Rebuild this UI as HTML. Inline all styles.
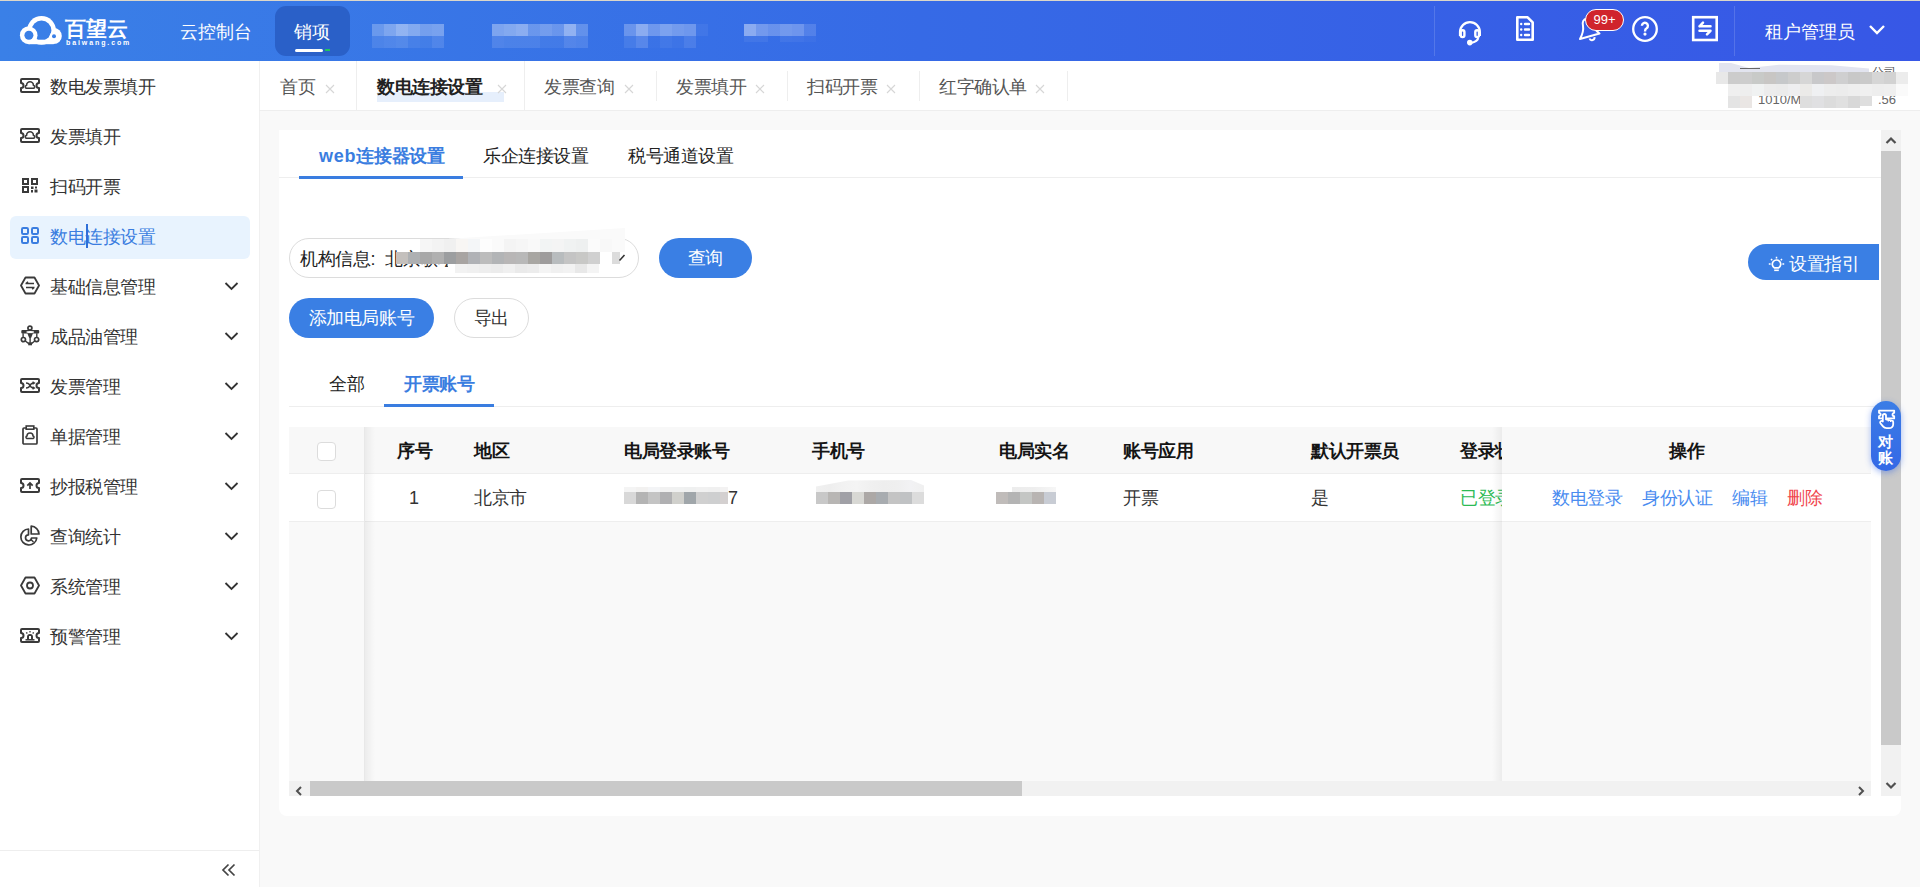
<!DOCTYPE html>
<html><head><meta charset="utf-8">
<style>
*{box-sizing:border-box;margin:0;padding:0}
html,body{width:1920px;height:887px;overflow:hidden;background:#f9f9f9;font-family:"Liberation Sans",sans-serif;font-size:18px;color:#333}
.abs{position:absolute}
svg{display:block}
#topline{left:0;top:0;width:1920px;height:1px;background:#dcd7c9}
#header{left:0;top:1px;width:1920px;height:60px;background:linear-gradient(90deg,#3a80e7 0%,#366ae6 48%,#3757e6 100%)}
.hnav{color:#fff;font-size:18px;line-height:20px;white-space:nowrap}
.blur{background:rgba(255,255,255,.35)}
#sidebar{left:0;top:61px;width:260px;height:826px;background:#fff;border-right:1px solid #f0f0f0}
.mi{position:absolute;left:0;width:259px;height:50px}
.mi .t{position:absolute;left:50px;top:16px;letter-spacing:-0.4px;line-height:20px;font-size:18px;color:#333;white-space:nowrap}
.mi svg.ic{position:absolute;left:20px}
.mi svg.ch{position:absolute;left:224px;top:20px}
#tabbar{left:259px;top:61px;width:1661px;height:50px;background:#fff;border-bottom:1px solid #eeeeee}
.tab{position:absolute;top:0;height:49px;font-size:18px;color:#555;line-height:20px;white-space:nowrap}
.tab .tt{position:absolute;top:16px}
.tab .x{position:absolute;top:23px;width:10px;height:10px}
.sep{position:absolute;width:1px;background:#eeeeee}
#card{left:279px;top:130px;width:1622px;height:686px;background:#fff;border-radius:0 0 8px 8px}
.btnp{position:absolute;background:#3a7fe4;color:#fff;border-radius:20px;text-align:center;font-size:18px}
.btno{position:absolute;background:#fff;color:#333;border:1px solid #dcdcdc;border-radius:20px;text-align:center;font-size:18px}
.th{position:absolute;top:441px;font-weight:bold;color:#151515;font-size:18px;line-height:20px;white-space:nowrap}
.td{position:absolute;top:488px;color:#333;font-size:18px;line-height:20px;white-space:nowrap}
.cb{position:absolute;width:19px;height:19px;border:1px solid #dcdcdc;border-radius:4px;background:#fff}
.gblur{position:absolute}
</style></head><body>
<div id="topline" class="abs"></div>
<div id="header" class="abs">
  <!-- logo -->
  <svg class="abs" style="left:0;top:-1px" width="70" height="60" viewBox="0 0 70 60">
    <defs><mask id="cm"><rect x="0" y="0" width="70" height="60" fill="#fff"/>
      <circle cx="41.5" cy="30.4" r="9.9" fill="#000"/>
      <rect x="20" y="39.7" width="45" height="10" fill="#fff"/>
      <circle cx="28.9" cy="35.2" r="8.6" fill="#fff"/>
      <circle cx="54" cy="36.3" r="4.4" fill="#fff"/>
      <circle cx="28.9" cy="35.2" r="4.5" fill="#000"/>
      <circle cx="54" cy="36.3" r="2" fill="#000"/>
    </mask></defs>
    <g mask="url(#cm)" fill="#fff">
      <circle cx="41.5" cy="30.4" r="14.4"/>
      <circle cx="28.9" cy="35.2" r="9"/>
      <circle cx="53.7" cy="36" r="8.1"/>
      <rect x="28.9" y="30" width="24.8" height="14.2"/>
    </g>
  </svg>
  <div class="abs" style="left:65px;top:17px;color:#fff;font-size:21px;font-weight:bold;line-height:22px;letter-spacing:0px">百望云</div>
  <div class="abs" style="left:66px;top:38px;color:#fff;font-size:7px;font-weight:bold;line-height:8px;letter-spacing:1.9px">baiwang.com</div>
  <div class="abs hnav" style="left:180px;top:21px">云控制台</div>
  <div class="abs" style="left:275px;top:5px;width:75px;height:50px;background:#2a60c8;border-radius:11px"></div>
  <div class="abs hnav" style="left:294px;top:21px">销项</div>
  <div class="abs" style="left:295px;top:48px;width:28px;height:3px;background:#fff;border-radius:2px"></div>
  <div class="abs" style="left:325px;top:48px;width:5px;height:2px;background:#22c35e"></div>
<div class="abs" style="left:372px;top:23px;width:12px;height:12px;background:rgba(255,255,255,0.25)"></div>
<div class="abs" style="left:372px;top:35px;width:12px;height:11.5px;background:rgba(255,255,255,0.1)"></div>
<div class="abs" style="left:384px;top:23px;width:12px;height:12px;background:rgba(255,255,255,0.35)"></div>
<div class="abs" style="left:384px;top:35px;width:12px;height:11.5px;background:rgba(255,255,255,0.12)"></div>
<div class="abs" style="left:396px;top:23px;width:12px;height:12px;background:rgba(255,255,255,0.45)"></div>
<div class="abs" style="left:396px;top:35px;width:12px;height:11.5px;background:rgba(255,255,255,0.14)"></div>
<div class="abs" style="left:408px;top:23px;width:12px;height:12px;background:rgba(255,255,255,0.38)"></div>
<div class="abs" style="left:408px;top:35px;width:12px;height:11.5px;background:rgba(255,255,255,0.08)"></div>
<div class="abs" style="left:420px;top:23px;width:12px;height:12px;background:rgba(255,255,255,0.3)"></div>
<div class="abs" style="left:420px;top:35px;width:12px;height:11.5px;background:rgba(255,255,255,0.06)"></div>
<div class="abs" style="left:432px;top:23px;width:12px;height:12px;background:rgba(255,255,255,0.32)"></div>
<div class="abs" style="left:432px;top:35px;width:12px;height:11.5px;background:rgba(255,255,255,0.12)"></div>
<div class="abs" style="left:492px;top:23px;width:12px;height:12px;background:rgba(255,255,255,0.35)"></div>
<div class="abs" style="left:492px;top:35px;width:12px;height:11.5px;background:rgba(255,255,255,0.12)"></div>
<div class="abs" style="left:504px;top:23px;width:12px;height:12px;background:rgba(255,255,255,0.38)"></div>
<div class="abs" style="left:504px;top:35px;width:12px;height:11.5px;background:rgba(255,255,255,0.1)"></div>
<div class="abs" style="left:516px;top:23px;width:12px;height:12px;background:rgba(255,255,255,0.42)"></div>
<div class="abs" style="left:516px;top:35px;width:12px;height:11.5px;background:rgba(255,255,255,0.1)"></div>
<div class="abs" style="left:528px;top:23px;width:12px;height:12px;background:rgba(255,255,255,0.25)"></div>
<div class="abs" style="left:528px;top:35px;width:12px;height:11.5px;background:rgba(255,255,255,0.1)"></div>
<div class="abs" style="left:540px;top:23px;width:12px;height:12px;background:rgba(255,255,255,0.3)"></div>
<div class="abs" style="left:540px;top:35px;width:12px;height:11.5px;background:rgba(255,255,255,0.06)"></div>
<div class="abs" style="left:552px;top:23px;width:12px;height:12px;background:rgba(255,255,255,0.25)"></div>
<div class="abs" style="left:552px;top:35px;width:12px;height:11.5px;background:rgba(255,255,255,0.06)"></div>
<div class="abs" style="left:564px;top:23px;width:12px;height:12px;background:rgba(255,255,255,0.45)"></div>
<div class="abs" style="left:564px;top:35px;width:12px;height:11.5px;background:rgba(255,255,255,0.14)"></div>
<div class="abs" style="left:576px;top:23px;width:12px;height:12px;background:rgba(255,255,255,0.22)"></div>
<div class="abs" style="left:576px;top:35px;width:12px;height:11.5px;background:rgba(255,255,255,0.12)"></div>
<div class="abs" style="left:624px;top:23px;width:12px;height:12px;background:rgba(255,255,255,0.25)"></div>
<div class="abs" style="left:624px;top:35px;width:12px;height:11.5px;background:rgba(255,255,255,0.08)"></div>
<div class="abs" style="left:636px;top:23px;width:12px;height:12px;background:rgba(255,255,255,0.42)"></div>
<div class="abs" style="left:636px;top:35px;width:12px;height:11.5px;background:rgba(255,255,255,0.16)"></div>
<div class="abs" style="left:648px;top:23px;width:12px;height:12px;background:rgba(255,255,255,0.28)"></div>
<div class="abs" style="left:648px;top:35px;width:12px;height:11.5px;background:rgba(255,255,255,0.02)"></div>
<div class="abs" style="left:660px;top:23px;width:12px;height:12px;background:rgba(255,255,255,0.35)"></div>
<div class="abs" style="left:660px;top:35px;width:12px;height:11.5px;background:rgba(255,255,255,0.06)"></div>
<div class="abs" style="left:672px;top:23px;width:12px;height:12px;background:rgba(255,255,255,0.3)"></div>
<div class="abs" style="left:672px;top:35px;width:12px;height:11.5px;background:rgba(255,255,255,0.03)"></div>
<div class="abs" style="left:684px;top:23px;width:12px;height:12px;background:rgba(255,255,255,0.28)"></div>
<div class="abs" style="left:684px;top:35px;width:12px;height:11.5px;background:rgba(255,255,255,0.1)"></div>
<div class="abs" style="left:696px;top:23px;width:12px;height:12px;background:rgba(255,255,255,0.05)"></div>
<div class="abs" style="left:744px;top:23px;width:12px;height:12px;background:rgba(255,255,255,0.42)"></div>
<div class="abs" style="left:744px;top:35px;width:12px;height:6px;background:rgba(255,255,255,0.06)"></div>
<div class="abs" style="left:756px;top:23px;width:12px;height:12px;background:rgba(255,255,255,0.3)"></div>
<div class="abs" style="left:756px;top:35px;width:12px;height:6px;background:rgba(255,255,255,0.06)"></div>
<div class="abs" style="left:768px;top:23px;width:12px;height:12px;background:rgba(255,255,255,0.25)"></div>
<div class="abs" style="left:780px;top:23px;width:12px;height:12px;background:rgba(255,255,255,0.3)"></div>
<div class="abs" style="left:780px;top:35px;width:12px;height:6px;background:rgba(255,255,255,0.06)"></div>
<div class="abs" style="left:792px;top:23px;width:12px;height:12px;background:rgba(255,255,255,0.28)"></div>
<div class="abs" style="left:792px;top:35px;width:12px;height:6px;background:rgba(255,255,255,0.05)"></div>
<div class="abs" style="left:804px;top:23px;width:12px;height:12px;background:rgba(255,255,255,0.14)"></div>
<div class="abs" style="left:804px;top:35px;width:12px;height:6px;background:rgba(255,255,255,0.03)"></div>
  <!-- right -->
  <div class="abs" style="left:1434px;top:5px;width:1px;height:50px;background:rgba(255,255,255,.15)"></div>
  <div class="abs" style="left:1734px;top:5px;width:1px;height:50px;background:rgba(255,255,255,.15)"></div>

  <svg class="abs" style="left:1458px;top:19px" width="24" height="27" viewBox="0 0 24 27">
    <path d="M2.1 16 V11.95 A9.85 9.85 0 0 1 21.8 11.95 V16" fill="none" stroke="#fff" stroke-width="2.4"/>
    <rect x="2.7" y="10.2" width="3.7" height="6.9" rx="1.8" fill="none" stroke="#fff" stroke-width="2.4"/>
    <rect x="17.3" y="10.2" width="3.7" height="6.9" rx="1.8" fill="none" stroke="#fff" stroke-width="2.4"/>
    <path d="M20.2 18 Q19.5 21.5 13 23" fill="none" stroke="#fff" stroke-width="2.2"/>
    <circle cx="11.8" cy="22.6" r="2.8" fill="#fff"/>
  </svg>
  <svg class="abs" style="left:1515px;top:14px" width="20" height="27" viewBox="0 0 20 27">
    <path d="M2.3 2.3 H12.6 L17.7 7.4 V24.8 H2.3 Z" fill="none" stroke="#fff" stroke-width="2.6" stroke-linejoin="round"/>
    <circle cx="6.2" cy="9" r="1.2" fill="#fff"/><circle cx="6.2" cy="14.5" r="1.2" fill="#fff"/><circle cx="6.2" cy="20" r="1.2" fill="#fff"/>
    <path d="M10 9 H14 M10 14.5 H14 M10 20 H14" stroke="#fff" stroke-width="2.4" stroke-linecap="round"/>
  </svg>
  <svg class="abs" style="left:1577px;top:12px" width="26" height="30" viewBox="0 0 26 30">
    <path d="M3 26 L22.5 20.5 Q17.5 17 16.5 11.5 Q15.5 5 10 5.5 Q4.5 6.5 6 13 Q7 18.5 3 26 Z" fill="none" stroke="#fff" stroke-width="2" stroke-linejoin="round"/>
    <path d="M12.5 25.5 A2.6 2.6 0 0 0 17.5 24.2" fill="none" stroke="#fff" stroke-width="2"/>
  </svg>
  <div class="abs" style="left:1585px;top:8px;width:39px;height:22px;background:#d0242c;border:1px solid #fff;border-radius:11px;color:#fff;font-size:13px;line-height:20px;text-align:center">99+</div>
  <svg class="abs" style="left:1631px;top:14px" width="28" height="28" viewBox="0 0 28 28">
    <circle cx="14" cy="14" r="11.8" fill="none" stroke="#fff" stroke-width="2.3"/>
    <path d="M10.9 10.8 A3 3 0 1 1 15.6 13.3 Q14 14.1 14 16.4" fill="none" stroke="#fff" stroke-width="2.4"/>
    <circle cx="14" cy="19.1" r="1.6" fill="#fff"/>
  </svg>
  <svg class="abs" style="left:1691px;top:14px" width="28" height="27" viewBox="0 0 28 27">
    <rect x="2.2" y="2.2" width="23.5" height="22.8" fill="none" stroke="#fff" stroke-width="2.6"/>
    <path d="M8.5 11.3 H19.5 M8.5 11.3 L12 7.7 M19.5 15.8 H8.5 M19.5 15.8 L16 19.4" fill="none" stroke="#fff" stroke-width="2.5" stroke-linecap="round" stroke-linejoin="round"/>
  </svg>
  <div class="abs hnav" style="left:1765px;top:21px">租户管理员</div>
  <svg class="abs" style="left:1868px;top:23px" width="18" height="12" viewBox="0 0 18 12"><path d="M2 2 L9 9 L16 2" fill="none" stroke="#fff" stroke-width="2.4"/></svg>
</div>

<div id="sidebar" class="abs">
<div class="mi" style="top:0px"><svg class="ic" style="top:17px" width="20" height="15" viewBox="0 0 20 15"><path d="M2 1 H18 Q19 1 19 2 V5 A2.5 2.5 0 0 0 19 10 V13 Q19 14 18 14 H2 Q1 14 1 13 V10 A2.5 2.5 0 0 0 1 5 V2 Q1 1 2 1 Z" fill="none" stroke="#3a3a3a" stroke-width="2" stroke-linejoin="round"/><path d="M6.2 10.2 H13.8 A1.6 1.6 0 0 0 13.4 7.2 A3.4 3.4 0 0 0 6.6 7.2 A1.6 1.6 0 0 0 6.2 10.2 Z" fill="none" stroke="#3a3a3a" stroke-width="1.6"/></svg><div class="t" style="">数电发票填开</div></div>
<div class="mi" style="top:50px"><svg class="ic" style="top:17px" width="20" height="15" viewBox="0 0 20 15"><path d="M2 1 H18 Q19 1 19 2 V5 A2.5 2.5 0 0 0 19 10 V13 Q19 14 18 14 H2 Q1 14 1 13 V10 A2.5 2.5 0 0 0 1 5 V2 Q1 1 2 1 Z" fill="none" stroke="#3a3a3a" stroke-width="2" stroke-linejoin="round"/><path d="M6.2 10.2 H13.8 A1.6 1.6 0 0 0 13.4 7.2 A3.4 3.4 0 0 0 6.6 7.2 A1.6 1.6 0 0 0 6.2 10.2 Z" fill="none" stroke="#3a3a3a" stroke-width="1.6"/></svg><div class="t" style="">发票填开</div></div>
<div class="mi" style="top:100px"><svg class="ic" style="left:22px;top:17px" width="16" height="15" viewBox="0 0 16 15"><rect x="1" y="1" width="5" height="5" fill="none" stroke="#3a3a3a" stroke-width="2"/><rect x="10" y="1" width="5" height="5" fill="none" stroke="#3a3a3a" stroke-width="2"/><rect x="1" y="9" width="5" height="5" fill="none" stroke="#3a3a3a" stroke-width="2"/><rect x="9" y="8.5" width="2.5" height="2.5" fill="#3a3a3a"/><rect x="12.5" y="11.5" width="3" height="3" fill="#3a3a3a"/><rect x="13" y="8.5" width="2" height="2" fill="#3a3a3a"/><rect x="9" y="12" width="2" height="2.5" fill="#3a3a3a"/></svg><div class="t" style="">扫码开票</div></div>
<div class="mi" style="top:150px"><div style="position:absolute;left:10px;top:5px;width:240px;height:43px;background:#e8f3fe;border-radius:6px"></div><svg class="ic" style="left:21px;top:16px" width="18" height="17" viewBox="0 0 18 17"><rect x="1" y="1" width="6" height="6" rx="1.2" fill="none" stroke="#3a7de0" stroke-width="2"/><rect x="11" y="1" width="6" height="6" rx="1.2" fill="none" stroke="#3a7de0" stroke-width="2"/><rect x="1" y="10" width="6" height="6" rx="1.2" fill="none" stroke="#3a7de0" stroke-width="2"/><rect x="11" y="10" width="6" height="6" rx="1.2" fill="none" stroke="#3a7de0" stroke-width="2"/></svg><div class="t" style="color:#3a7de0">数电连接设置</div></div>
<div class="mi" style="top:200px"><svg class="ic" style="top:15px" width="20" height="19" viewBox="0 0 20 19"><path d="M5.5 1.5 H14.5 L19 9.5 L14.5 17.5 H5.5 L1 9.5 Z" fill="none" stroke="#3a3a3a" stroke-width="1.8" stroke-linejoin="round"/><path d="M5.5 7.5 H14 M6 11.5 H14.5 M8 5.8 L6 7.5 M12.2 13.2 L14.2 11.5" fill="none" stroke="#3a3a3a" stroke-width="1.5"/></svg><div class="t" style="">基础信息管理</div><svg class="ch" width="15" height="10" viewBox="0 0 15 10"><path d="M1.5 2 L7.5 8 L13.5 2" fill="none" stroke="#333" stroke-width="1.8"/></svg></div>
<div class="mi" style="top:250px"><svg class="ic" style="top:14px" width="20" height="21" viewBox="0 0 20 21"><path d="M2.3 5.1 H18.2 Q19.2 5.1 19.2 6.1 V7.5 Q19.2 8.5 18.2 8.5 H2.3 Q1.3 8.5 1.3 7.5 V6.1 Q1.3 5.1 2.3 5.1Z" fill="#3a3a3a"/><ellipse cx="10.2" cy="6.9" rx="3.9" ry="1" fill="#fff"/><circle cx="9.9" cy="3.1" r="2" fill="#fff" stroke="#3a3a3a" stroke-width="1.7"/><path d="M7.3 8.3 H13 L11.2 12.8 H9.1 Z" fill="#3a3a3a"/><path d="M10.1 12 V18 M3.1 8.3 V12.8 M16.8 8.3 V12.8 M5.3 16 L8.8 18.6 M14.8 16 L11.4 18.6" fill="none" stroke="#3a3a3a" stroke-width="1.4"/><circle cx="3.4" cy="14.6" r="2.1" fill="#fff" stroke="#3a3a3a" stroke-width="1.7"/><circle cx="16.6" cy="14.6" r="2.1" fill="#fff" stroke="#3a3a3a" stroke-width="1.7"/><rect x="8.2" y="17.4" width="3.8" height="2.9" fill="#3a3a3a"/></svg><div class="t" style="">成品油管理</div><svg class="ch" width="15" height="10" viewBox="0 0 15 10"><path d="M1.5 2 L7.5 8 L13.5 2" fill="none" stroke="#333" stroke-width="1.8"/></svg></div>
<div class="mi" style="top:300px"><svg class="ic" style="top:17px" width="20" height="15" viewBox="0 0 20 15"><path d="M2 1 H18 Q19 1 19 2 V5 A2.5 2.5 0 0 0 19 10 V13 Q19 14 18 14 H2 Q1 14 1 13 V10 A2.5 2.5 0 0 0 1 5 V2 Q1 1 2 1 Z" fill="none" stroke="#3a3a3a" stroke-width="2" stroke-linejoin="round"/><path d="M6 5 Q9 5 10 7.5 T14 10 M6 10 Q9 10 10 7.5 T14 5 M12.5 3.8 L14.3 5 L12.5 6.2 M12.5 8.8 L14.3 10 L12.5 11.2" fill="none" stroke="#3a3a3a" stroke-width="1.5"/></svg><div class="t" style="">发票管理</div><svg class="ch" width="15" height="10" viewBox="0 0 15 10"><path d="M1.5 2 L7.5 8 L13.5 2" fill="none" stroke="#333" stroke-width="1.8"/></svg></div>
<div class="mi" style="top:350px"><svg class="ic" style="left:22px;top:14px" width="16" height="20" viewBox="0 0 16 20"><rect x="1" y="3" width="14" height="16" rx="1" fill="none" stroke="#3a3a3a" stroke-width="1.7"/><rect x="4.2" y="1" width="7.6" height="3.2" fill="#fff" stroke="#3a3a3a" stroke-width="1.6"/><path d="M4.8 13.5 H11.2 A1.3 1.3 0 0 0 11 11 A3 3 0 0 0 5 11 A1.3 1.3 0 0 0 4.8 13.5Z" fill="none" stroke="#3a3a3a" stroke-width="1.5"/></svg><div class="t" style="">单据管理</div><svg class="ch" width="15" height="10" viewBox="0 0 15 10"><path d="M1.5 2 L7.5 8 L13.5 2" fill="none" stroke="#333" stroke-width="1.8"/></svg></div>
<div class="mi" style="top:400px"><svg class="ic" style="top:17px" width="20" height="15" viewBox="0 0 20 15"><path d="M2 1 H18 Q19 1 19 2 V5 A2.5 2.5 0 0 0 19 10 V13 Q19 14 18 14 H2 Q1 14 1 13 V10 A2.5 2.5 0 0 0 1 5 V2 Q1 1 2 1 Z" fill="none" stroke="#3a3a3a" stroke-width="2" stroke-linejoin="round"/><path d="M10 11 V5 M7.3 7.6 L10 4.9 L12.7 7.6" fill="none" stroke="#3a3a3a" stroke-width="1.7"/></svg><div class="t" style="">抄报税管理</div><svg class="ch" width="15" height="10" viewBox="0 0 15 10"><path d="M1.5 2 L7.5 8 L13.5 2" fill="none" stroke="#333" stroke-width="1.8"/></svg></div>
<div class="mi" style="top:450px"><svg class="ic" style="top:14px" width="20" height="21" viewBox="0 0 20 21"><path d="M8.5 4 A8 8 0 1 0 16.8 13 L11.5 13 A3 3 0 1 1 8.5 9.8 Z" fill="none" stroke="#3a3a3a" stroke-width="1.7" stroke-linejoin="round"/><path d="M11.2 1.2 A8 8 0 0 1 19 9 H11.2 Z" fill="none" stroke="#3a3a3a" stroke-width="1.7" stroke-linejoin="round"/><path d="M10.5 14 L13.5 17" stroke="#3a3a3a" stroke-width="1.5"/></svg><div class="t" style="">查询统计</div><svg class="ch" width="15" height="10" viewBox="0 0 15 10"><path d="M1.5 2 L7.5 8 L13.5 2" fill="none" stroke="#333" stroke-width="1.8"/></svg></div>
<div class="mi" style="top:500px"><svg class="ic" style="top:15px" width="20" height="19" viewBox="0 0 20 19"><path d="M5.5 1.5 H14.5 L19 9.5 L14.5 17.5 H5.5 L1 9.5 Z" fill="none" stroke="#3a3a3a" stroke-width="1.8" stroke-linejoin="round"/><circle cx="10" cy="9.5" r="3" fill="none" stroke="#3a3a3a" stroke-width="1.8"/></svg><div class="t" style="">系统管理</div><svg class="ch" width="15" height="10" viewBox="0 0 15 10"><path d="M1.5 2 L7.5 8 L13.5 2" fill="none" stroke="#333" stroke-width="1.8"/></svg></div>
<div class="mi" style="top:550px"><svg class="ic" style="top:17px" width="20" height="15" viewBox="0 0 20 15"><path d="M2 1 H18 Q19 1 19 2 V5 A2.5 2.5 0 0 0 19 10 V13 Q19 14 18 14 H2 Q1 14 1 13 V10 A2.5 2.5 0 0 0 1 5 V2 Q1 1 2 1 Z" fill="none" stroke="#3a3a3a" stroke-width="2" stroke-linejoin="round"/><path d="M7 12 V9 A3 3 0 0 1 13 9 V12 Z" fill="#3a3a3a"/><path d="M5.5 11.8 H14.5" stroke="#3a3a3a" stroke-width="1.5"/><path d="M10 3 V4.6 M6.3 4.3 L7.3 5.5 M13.7 4.3 L12.7 5.5" stroke="#3a3a3a" stroke-width="1.3"/><path d="M9 8 H11 V11 H9Z" fill="#fff"/></svg><div class="t" style="">预警管理</div><svg class="ch" width="15" height="10" viewBox="0 0 15 10"><path d="M1.5 2 L7.5 8 L13.5 2" fill="none" stroke="#333" stroke-width="1.8"/></svg></div>
<div style="position:absolute;left:86px;top:163px;width:2px;height:24px;background:#2f6fd8"></div>
<div style="position:absolute;left:0;top:789px;width:259px;height:1px;background:#eeeeee"></div>
<svg style="position:absolute;left:221px;top:802px" width="16" height="14" viewBox="0 0 16 14"><path d="M7.5 1.5 L2 7 L7.5 12.5 M13.5 1.5 L8 7 L13.5 12.5" fill="none" stroke="#444" stroke-width="1.7"/></svg>
</div>

<div id="tabbar" class="abs">
<div class="abs" style="left:0;top:0;width:1px;height:49px;background:#f0f0f0"></div>
<div class="tab" style="left:21px"><div class="tt" style="left:0;letter-spacing:-0.4px">首页</div></div>
<div class="abs" style="left:66px;top:23px;width:10px;height:10px"><svg width="10" height="10" viewBox="0 0 10 10"><path d="M1 1 L9 9 M9 1 L1 9" stroke="#d6d6d6" stroke-width="1.1"/></svg></div>
<div class="abs" style="left:118px;top:31px;width:127px;height:10px;background:#e6effc"></div>
<div class="tab" style="left:118px"><div class="tt" style="left:0;font-weight:bold;color:#222;letter-spacing:-0.4px">数电连接设置</div></div>
<div class="abs" style="left:238px;top:23px;width:10px;height:10px"><svg width="10" height="10" viewBox="0 0 10 10"><path d="M1 1 L9 9 M9 1 L1 9" stroke="#d6d6d6" stroke-width="1.1"/></svg></div>
<div class="tab" style="left:285px"><div class="tt" style="left:0;letter-spacing:-0.4px">发票查询</div></div>
<div class="abs" style="left:365px;top:23px;width:10px;height:10px"><svg width="10" height="10" viewBox="0 0 10 10"><path d="M1 1 L9 9 M9 1 L1 9" stroke="#d6d6d6" stroke-width="1.1"/></svg></div>
<div class="tab" style="left:417px"><div class="tt" style="left:0;letter-spacing:-0.4px">发票填开</div></div>
<div class="abs" style="left:496px;top:23px;width:10px;height:10px"><svg width="10" height="10" viewBox="0 0 10 10"><path d="M1 1 L9 9 M9 1 L1 9" stroke="#d6d6d6" stroke-width="1.1"/></svg></div>
<div class="tab" style="left:548px"><div class="tt" style="left:0;letter-spacing:-0.4px">扫码开票</div></div>
<div class="abs" style="left:627px;top:23px;width:10px;height:10px"><svg width="10" height="10" viewBox="0 0 10 10"><path d="M1 1 L9 9 M9 1 L1 9" stroke="#d6d6d6" stroke-width="1.1"/></svg></div>
<div class="tab" style="left:680px"><div class="tt" style="left:0;letter-spacing:-0.4px">红字确认单</div></div>
<div class="abs" style="left:776px;top:23px;width:10px;height:10px"><svg width="10" height="10" viewBox="0 0 10 10"><path d="M1 1 L9 9 M9 1 L1 9" stroke="#d6d6d6" stroke-width="1.1"/></svg></div>
<div class="sep" style="left:97px;top:0;height:49px"></div>
<div class="sep" style="left:265px;top:0;height:49px"></div>
<div class="sep" style="left:397px;top:10px;height:30px"></div>
<div class="sep" style="left:528px;top:10px;height:30px"></div>
<div class="sep" style="left:660px;top:10px;height:30px"></div>
<div class="sep" style="left:808px;top:10px;height:30px"></div>
<div class="abs" style="left:1499px;top:32px;font-size:13px;line-height:14px;color:#666;white-space:nowrap">1010/M/</div>
<div class="abs" style="left:1619px;top:32px;font-size:13px;line-height:14px;color:#666;white-space:nowrap">.56</div>
<div class="abs" style="left:1460px;top:2px;width:150px;height:9px;background:#e2e4ef;clip-path:polygon(0 0,8% 0,20% 55%,40% 20%,75% 25%,100% 60%,100% 100%,0 100%)"></div>
<div class="abs" style="left:1481px;top:7px;width:20px;height:4px;border-top:1.5px solid #666"></div>
<div class="abs" style="left:1613px;top:6px;width:30px;height:5px;color:#555;font-size:12px;line-height:10px;overflow:hidden">公司</div>
<div class="abs" style="left:1457px;top:11px;width:12px;height:12px;background:#e8e8e8"></div>
<div class="abs" style="left:1469px;top:11px;width:12px;height:12px;background:#cccccc"></div>
<div class="abs" style="left:1481px;top:11px;width:12px;height:12px;background:#cdcdcd"></div>
<div class="abs" style="left:1493px;top:11px;width:12px;height:12px;background:#c8cac8"></div>
<div class="abs" style="left:1505px;top:11px;width:12px;height:12px;background:#c8c6c4"></div>
<div class="abs" style="left:1517px;top:11px;width:12px;height:12px;background:#c6c8ca"></div>
<div class="abs" style="left:1529px;top:11px;width:12px;height:12px;background:#cdcdcd"></div>
<div class="abs" style="left:1541px;top:11px;width:12px;height:12px;background:#d6d6d6"></div>
<div class="abs" style="left:1553px;top:11px;width:12px;height:12px;background:#c8c8ca"></div>
<div class="abs" style="left:1565px;top:11px;width:12px;height:12px;background:#ccc8c8"></div>
<div class="abs" style="left:1577px;top:11px;width:12px;height:12px;background:#cfcfd0"></div>
<div class="abs" style="left:1589px;top:11px;width:12px;height:12px;background:#c8c8c8"></div>
<div class="abs" style="left:1601px;top:11px;width:12px;height:12px;background:#cacaca"></div>
<div class="abs" style="left:1613px;top:11px;width:12px;height:12px;background:#d6d6d6"></div>
<div class="abs" style="left:1625px;top:11px;width:12px;height:12px;background:#d2d2d2"></div>
<div class="abs" style="left:1637px;top:11px;width:12px;height:12px;background:#ececec"></div>
<div class="abs" style="left:1469px;top:23px;width:12px;height:12px;background:#efefef"></div>
<div class="abs" style="left:1481px;top:23px;width:12px;height:12px;background:#eeeeee"></div>
<div class="abs" style="left:1493px;top:23px;width:12px;height:12px;background:#f0f2f2"></div>
<div class="abs" style="left:1505px;top:23px;width:12px;height:12px;background:#ececec"></div>
<div class="abs" style="left:1517px;top:23px;width:12px;height:12px;background:#ebebeb"></div>
<div class="abs" style="left:1529px;top:23px;width:12px;height:12px;background:#eeeef0"></div>
<div class="abs" style="left:1541px;top:23px;width:12px;height:12px;background:#ebeae8"></div>
<div class="abs" style="left:1553px;top:23px;width:12px;height:12px;background:#eff0f2"></div>
<div class="abs" style="left:1565px;top:23px;width:12px;height:12px;background:#ededed"></div>
<div class="abs" style="left:1577px;top:23px;width:12px;height:12px;background:#ececec"></div>
<div class="abs" style="left:1589px;top:23px;width:12px;height:12px;background:#eeeeee"></div>
<div class="abs" style="left:1601px;top:23px;width:12px;height:12px;background:#f0f0f0"></div>
<div class="abs" style="left:1613px;top:23px;width:12px;height:12px;background:#eeeeee"></div>
<div class="abs" style="left:1625px;top:23px;width:12px;height:12px;background:#efefef"></div>
<div class="abs" style="left:1637px;top:23px;width:12px;height:12px;background:#fafafa"></div>
<div class="abs" style="left:1469px;top:35px;width:12px;height:12px;background:#e4e4e4"></div>
<div class="abs" style="left:1481px;top:35px;width:12px;height:12px;background:#eae6e4"></div>
<div class="abs" style="left:1541px;top:35px;width:12px;height:12px;background:#dedede"></div>
<div class="abs" style="left:1553px;top:35px;width:12px;height:12px;background:#e0e0e2"></div>
<div class="abs" style="left:1565px;top:35px;width:12px;height:12px;background:#dcdcdc"></div>
<div class="abs" style="left:1577px;top:35px;width:12px;height:12px;background:#e0e0e0"></div>
<div class="abs" style="left:1589px;top:35px;width:12px;height:12px;background:#d8d8d8"></div>
<div class="abs" style="left:1601px;top:35px;width:12px;height:10px;background:#dedede"></div>

</div>

<div id="card" class="abs">
<div class="abs" style="left:0px;top:47px;width:1602px;height:1px;background:#eeeeee"></div>
<div class="abs" style="left:20px;top:46px;width:164px;height:3px;background:#3a7de0"></div>
<div class="abs" style="left:40px;top:16px;font-weight:bold;color:#3a7de0;line-height:20px;letter-spacing:-0.4px;white-space:nowrap"><span style="letter-spacing:0.8px">web</span>连接器设置</div>
<div class="abs" style="left:204px;top:16px;color:#222;line-height:20px;letter-spacing:-0.4px;white-space:nowrap">乐企连接设置</div>
<div class="abs" style="left:349px;top:16px;color:#222;line-height:20px;letter-spacing:-0.4px;white-space:nowrap">税号通道设置</div>
<div class="abs" style="left:10px;top:108px;width:350px;height:40px;border:1px solid #dcdcdc;border-radius:20px;background:#fff"></div>
<div class="abs" style="left:21px;top:119px;color:#222;line-height:20px;letter-spacing:-0.4px;white-space:nowrap">机构信息:</div>
<div class="abs" style="left:106px;top:119px;width:63px;height:22px;overflow:hidden;color:#222;line-height:20px;letter-spacing:-0.4px;white-space:nowrap">北京歌坛</div>
<div class="abs" style="left:170px;top:98px;width:176px;height:24px;background:#fafafa;clip-path:polygon(0 45%,100% 0,100% 100%,0 100%)"></div>
<div class="abs" style="left:141px;top:109px;width:12px;height:13px;background:#f6f6f6"></div>
<div class="abs" style="left:153px;top:109px;width:12px;height:13px;background:#f3f3f3"></div>
<div class="abs" style="left:165px;top:109px;width:12px;height:13px;background:#f0f0f0"></div>
<div class="abs" style="left:177px;top:109px;width:12px;height:13px;background:#f8f6f4"></div>
<div class="abs" style="left:189px;top:109px;width:12px;height:13px;background:#f4f6f8"></div>
<div class="abs" style="left:201px;top:109px;width:12px;height:13px;background:#fdfdfd"></div>
<div class="abs" style="left:213px;top:109px;width:12px;height:13px;background:#fafafa"></div>
<div class="abs" style="left:225px;top:109px;width:12px;height:13px;background:#f4f4f4"></div>
<div class="abs" style="left:237px;top:109px;width:12px;height:13px;background:#f6f6f6"></div>
<div class="abs" style="left:249px;top:109px;width:12px;height:13px;background:#f9f9f9"></div>
<div class="abs" style="left:261px;top:109px;width:12px;height:13px;background:#f2f4f4"></div>
<div class="abs" style="left:273px;top:109px;width:12px;height:13px;background:#f4f4f4"></div>
<div class="abs" style="left:285px;top:109px;width:12px;height:13px;background:#f0f2f2"></div>
<div class="abs" style="left:297px;top:109px;width:12px;height:13px;background:#eef0f0"></div>
<div class="abs" style="left:309px;top:109px;width:12px;height:13px;background:#fbfbfb"></div>
<div class="abs" style="left:321px;top:109px;width:12px;height:13px;background:#f8f8f8"></div>
<div class="abs" style="left:117px;top:122px;width:12px;height:12px;background:#c4c0bc"></div>
<div class="abs" style="left:129px;top:122px;width:12px;height:12px;background:#aeb0b2"></div>
<div class="abs" style="left:141px;top:122px;width:12px;height:12px;background:#a8a8a8"></div>
<div class="abs" style="left:153px;top:122px;width:12px;height:12px;background:#b0b0b0"></div>
<div class="abs" style="left:165px;top:122px;width:12px;height:12px;background:#9c9ea0"></div>
<div class="abs" style="left:177px;top:122px;width:12px;height:12px;background:#a8a4a2"></div>
<div class="abs" style="left:189px;top:122px;width:12px;height:12px;background:#b0b2b6"></div>
<div class="abs" style="left:201px;top:122px;width:12px;height:12px;background:#bcbcbc"></div>
<div class="abs" style="left:213px;top:122px;width:12px;height:12px;background:#b2b4b6"></div>
<div class="abs" style="left:225px;top:122px;width:12px;height:12px;background:#b8b6b6"></div>
<div class="abs" style="left:237px;top:122px;width:12px;height:12px;background:#b8b8b8"></div>
<div class="abs" style="left:249px;top:122px;width:12px;height:12px;background:#a8a6a2"></div>
<div class="abs" style="left:261px;top:122px;width:12px;height:12px;background:#9e9c9c"></div>
<div class="abs" style="left:273px;top:122px;width:12px;height:12px;background:#b8bcbe"></div>
<div class="abs" style="left:285px;top:122px;width:12px;height:12px;background:#c4c4c4"></div>
<div class="abs" style="left:297px;top:122px;width:12px;height:12px;background:#c8c8c6"></div>
<div class="abs" style="left:309px;top:122px;width:12px;height:12px;background:#d0d0d0"></div>
<div class="abs" style="left:333px;top:122px;width:8px;height:12px;background:#dcdcdc"></div>
<div class="abs" style="left:176px;top:134px;width:12px;height:9px;background:#f2f2f2"></div>
<div class="abs" style="left:188px;top:134px;width:12px;height:9px;background:#f0f0f0"></div>
<div class="abs" style="left:200px;top:134px;width:12px;height:9px;background:#eeeeee"></div>
<div class="abs" style="left:212px;top:134px;width:12px;height:9px;background:#ececec"></div>
<div class="abs" style="left:224px;top:134px;width:12px;height:9px;background:#f0f0f0"></div>
<div class="abs" style="left:236px;top:134px;width:12px;height:9px;background:#eaeaea"></div>
<div class="abs" style="left:248px;top:134px;width:12px;height:9px;background:#ececec"></div>
<div class="abs" style="left:260px;top:134px;width:12px;height:9px;background:#f4f4f4"></div>
<div class="abs" style="left:272px;top:134px;width:12px;height:9px;background:#f0f0f0"></div>
<div class="abs" style="left:284px;top:134px;width:12px;height:9px;background:#f2f2f2"></div>
<div class="abs" style="left:296px;top:134px;width:12px;height:9px;background:#e8e8e8"></div>
<div class="abs" style="left:308px;top:134px;width:12px;height:9px;background:#f4f4f4"></div>
<svg class="abs" style="left:339px;top:124px" width="8" height="8" viewBox="0 0 8 8"><path d="M1.5 6.5 L6.5 1" stroke="#333" stroke-width="1.6"/></svg>
<!-- query button -->
<div class="btnp" style="left:380px;top:108px;width:93px;height:40px;line-height:40px;letter-spacing:-0.4px">查询</div>
<div class="abs" style="left:1469px;top:114px;width:131px;height:36px;background:#3a7fe4;border-radius:18px 0 0 18px;color:#fff">
<svg class="abs" style="left:20px;top:12px" width="17" height="17" viewBox="0 0 17 17"><path d="M6.3 11.8 A4.2 4.2 0 1 1 10.7 11.8 Z" fill="none" stroke="#fff" stroke-width="1.7"/><path d="M6.2 14.3 H10.8" stroke="#fff" stroke-width="1.6"/><path d="M8.5 0.8 V2.6 M0.8 8 H2.6 M14.4 8 H16.2 M3 3 L4.2 4.2 M14 3 L12.8 4.2" stroke="#fff" stroke-width="1.5"/></svg>
<div class="abs" style="left:41px;top:10px;line-height:20px;letter-spacing:-0.4px;white-space:nowrap">设置指引</div></div>
<div class="btnp" style="left:10px;top:168px;width:145px;height:40px;line-height:40px;letter-spacing:-0.4px">添加电局账号</div>
<div class="btno" style="left:175px;top:168px;width:75px;height:40px;line-height:38px;letter-spacing:-0.4px">导出</div>
<div class="abs" style="left:10px;top:276px;width:1592px;height:1px;background:#eeeeee"></div>
<div class="abs" style="left:105px;top:274px;width:110px;height:3px;background:#3a7de0"></div>
<div class="abs" style="left:50px;top:244px;color:#222;line-height:20px;letter-spacing:-0.4px">全部</div>
<div class="abs" style="left:125px;top:244px;color:#3a7de0;font-weight:bold;line-height:20px;letter-spacing:-0.4px">开票账号</div>
<div class="abs" style="left:10px;top:297px;width:1582px;height:46px;background:#f8f8f8"></div>
<div class="abs" style="left:10px;top:343px;width:1582px;height:1px;background:#eeeeee"></div>
<div class="abs" style="left:10px;top:344px;width:1582px;height:47px;background:#fff"></div>
<div class="abs" style="left:10px;top:391px;width:1582px;height:1px;background:#eeeeee"></div>
<div class="abs" style="left:10px;top:392px;width:1582px;height:259px;background:#f9f9f9"></div>
<div class="abs th" style="left:118px;top:311px;letter-spacing:-0.4px">序号</div>
<div class="abs th" style="left:195px;top:311px;letter-spacing:-0.4px">地区</div>
<div class="abs th" style="left:345px;top:311px;letter-spacing:-0.4px">电局登录账号</div>
<div class="abs th" style="left:533px;top:311px;letter-spacing:-0.4px">手机号</div>
<div class="abs th" style="left:720px;top:311px;letter-spacing:-0.4px">电局实名</div>
<div class="abs th" style="left:844px;top:311px;letter-spacing:-0.4px">账号应用</div>
<div class="abs th" style="left:1032px;top:311px;letter-spacing:-0.4px">默认开票员</div>
<div class="abs th" style="left:1181px;top:311px;letter-spacing:-0.4px">登录状态</div>
<div class="abs td" style="left:130px;top:358px">1</div>
<div class="abs td" style="left:195px;top:358px;letter-spacing:-0.4px">北京市</div>
<div class="abs td" style="left:449px;top:358px">7</div>
<div class="abs td" style="left:844px;top:358px;letter-spacing:-0.4px">开票</div>
<div class="abs td" style="left:1032px;top:358px;letter-spacing:-0.4px">是</div>
<div class="abs td" style="left:1181px;top:358px;color:#2dba54;letter-spacing:-0.4px">已登录</div>
<div class="abs" style="left:345px;top:362px;width:12px;height:12px;background:#d8d8d8"></div>
<div class="abs" style="left:357px;top:362px;width:12px;height:12px;background:#b4b4b4"></div>
<div class="abs" style="left:369px;top:362px;width:12px;height:12px;background:#c4c4c4"></div>
<div class="abs" style="left:381px;top:362px;width:12px;height:12px;background:#b0b0b2"></div>
<div class="abs" style="left:393px;top:362px;width:12px;height:12px;background:#d0d0cc"></div>
<div class="abs" style="left:405px;top:362px;width:12px;height:12px;background:#a0a6aa"></div>
<div class="abs" style="left:417px;top:362px;width:12px;height:12px;background:#d0d0d0"></div>
<div class="abs" style="left:429px;top:362px;width:12px;height:12px;background:#cecfd0"></div>
<div class="abs" style="left:441px;top:362px;width:8px;height:12px;background:#d4d0d0"></div>
<div class="abs" style="left:345px;top:357px;width:12px;height:5px;background:#f4f4f4"></div>
<div class="abs" style="left:357px;top:357px;width:12px;height:5px;background:#f2f1f0"></div>
<div class="abs" style="left:369px;top:357px;width:12px;height:5px;background:#f3f4f6"></div>
<div class="abs" style="left:381px;top:357px;width:12px;height:5px;background:#f1f1f1"></div>
<div class="abs" style="left:393px;top:357px;width:12px;height:5px;background:#f0f1f1"></div>
<div class="abs" style="left:405px;top:357px;width:12px;height:5px;background:#eff0f0"></div>
<div class="abs" style="left:417px;top:357px;width:12px;height:5px;background:#f1f1f1"></div>
<div class="abs" style="left:429px;top:357px;width:12px;height:5px;background:#f0f0f0"></div>
<div class="abs" style="left:441px;top:357px;width:8px;height:5px;background:#f3f2f2"></div>
<div class="abs" style="left:537px;top:362px;width:12px;height:12px;background:#c8c8c8"></div>
<div class="abs" style="left:549px;top:362px;width:12px;height:12px;background:#b8b6b4"></div>
<div class="abs" style="left:561px;top:362px;width:12px;height:12px;background:#a0a0a6"></div>
<div class="abs" style="left:573px;top:362px;width:12px;height:12px;background:#d8d8d4"></div>
<div class="abs" style="left:585px;top:362px;width:12px;height:12px;background:#aca8a6"></div>
<div class="abs" style="left:597px;top:362px;width:12px;height:12px;background:#a8acb0"></div>
<div class="abs" style="left:609px;top:362px;width:12px;height:12px;background:#c4c4c4"></div>
<div class="abs" style="left:621px;top:362px;width:12px;height:12px;background:#c0c2c4"></div>
<div class="abs" style="left:633px;top:362px;width:12px;height:12px;background:#dcdcdc"></div>
<div class="abs" style="left:537px;top:350px;width:108px;height:12px;clip-path:polygon(0 55%,15% 30%,30% 5%,88% 0,100% 45%,100% 100%,0 100%);background:linear-gradient(90deg,#f0f0f0,#eeeeee,#f2f2f2,#f4f4f4,#f0f0f0,#eeeeee,#efefef,#f2f2f4,#f0f0f0)"></div>
<div class="abs" style="left:717px;top:362px;width:12px;height:12px;background:#c0bcba"></div>
<div class="abs" style="left:729px;top:362px;width:12px;height:12px;background:#b4b4b4"></div>
<div class="abs" style="left:741px;top:362px;width:12px;height:12px;background:#c4c6c4"></div>
<div class="abs" style="left:753px;top:362px;width:12px;height:12px;background:#b8b4b2"></div>
<div class="abs" style="left:765px;top:362px;width:12px;height:12px;background:#c8ccd4"></div>
<div class="abs" style="left:733px;top:357px;width:44px;height:5px;background:linear-gradient(90deg,#ececec,#eeeeee 50%,#f6f6f6)"></div>
<div class="cb" style="left:38px;top:312px"></div>
<div class="cb" style="left:38px;top:360px"></div>
<div class="abs" style="left:85px;top:297px;width:1px;height:354px;background:#e8e8e8"></div>
<div class="abs" style="left:86px;top:297px;width:10px;height:354px;background:linear-gradient(90deg,rgba(0,0,0,.05),rgba(0,0,0,0))"></div>
<div class="abs" style="left:1213px;top:297px;width:10px;height:354px;background:linear-gradient(270deg,rgba(0,0,0,.05),rgba(0,0,0,0))"></div>
<div class="abs" style="left:1223px;top:297px;width:369px;height:46px;background:#f8f8f8"></div>
<div class="abs" style="left:1223px;top:344px;width:369px;height:46px;background:#fff"></div>
<div class="abs th" style="left:1390px;top:311px;letter-spacing:-0.4px">操作</div>
<div class="abs td" style="left:1273px;top:358px;color:#4a8cf0;letter-spacing:-0.4px">数电登录</div>
<div class="abs td" style="left:1363px;top:358px;color:#4a8cf0;letter-spacing:-0.4px">身份认证</div>
<div class="abs td" style="left:1453px;top:358px;color:#4a8cf0;letter-spacing:-0.4px">编辑</div>
<div class="abs td" style="left:1508px;top:358px;color:#f0464e;letter-spacing:-0.4px">删除</div>
<div class="abs" style="left:10px;top:651px;width:1582px;height:15px;background:#f1f1f1"></div>
<div class="abs" style="left:31px;top:651px;width:712px;height:15px;background:#c9c9c9"></div>
<svg class="abs" style="left:15px;top:656px" width="10" height="10" viewBox="0 0 10 10"><path d="M7 1 L3 5 L7 9" fill="none" stroke="#505050" stroke-width="2"/></svg>
<svg class="abs" style="left:1577px;top:656px" width="10" height="10" viewBox="0 0 10 10"><path d="M3 1 L7 5 L3 9" fill="none" stroke="#505050" stroke-width="2"/></svg>
<div class="abs" style="left:1602px;top:0px;width:20px;height:666px;background:#f1f1f1"></div>
<div class="abs" style="left:1602px;top:21px;width:20px;height:594px;background:#c9c9c9"></div>
<svg class="abs" style="left:1606px;top:5px" width="12" height="10" viewBox="0 0 12 10"><path d="M1.5 8 L6 3.5 L10.5 8" fill="none" stroke="#505050" stroke-width="2.2"/></svg>
<svg class="abs" style="left:1606px;top:651px" width="12" height="10" viewBox="0 0 12 10"><path d="M1.5 2 L6 6.5 L10.5 2" fill="none" stroke="#505050" stroke-width="2.2"/></svg>
</div>
<div class="abs" style="left:1871px;top:401px;width:30px;height:70px;border-radius:15px;background:linear-gradient(180deg,#3b7de6,#3468e6);box-shadow:0 2px 6px rgba(51,102,230,.45)">
<svg class="abs" style="left:7px;top:8px" width="18" height="21" viewBox="0 0 18 21"><path d="M1 1.6 H16.2 V3.8 A1.7 1.7 0 0 0 16.2 7.2 V9.4 H1 V7.2 A1.7 1.7 0 0 0 1 3.8 Z" fill="none" stroke="#fff" stroke-width="1.8" stroke-linejoin="round"/><path d="M4.8 12.6 V6.6 A1.6 1.6 0 0 1 8 6.6 V10.4 L13.8 11.6 A1.4 1.4 0 0 1 15.2 13 V15.2 A4 4 0 0 1 11.2 19.2 H8.6 A4.6 4.6 0 0 1 5 17.4 L2.4 14.2 A1.2 1.2 0 0 1 4.8 12.6 Z" fill="#3670e6" stroke="#fff" stroke-width="1.8" stroke-linejoin="round"/><path d="M10.3 10.9 V12.6 M12.6 11.4 V13" stroke="#fff" stroke-width="1.2"/></svg>
<div class="abs" style="left:7px;top:33px;color:#fff;font-size:15px;font-weight:bold;line-height:16px;width:16px">对<br>账</div></div>
</body></html>
